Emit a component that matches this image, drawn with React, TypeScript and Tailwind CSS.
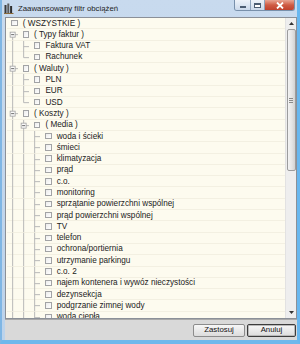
type Slot = "v" | "tee" | "end" | "exp" | "expDown";

type Row = { label: string; slots: Slot[] };

const rows: Row[] = [
  { label: "( WSZYSTKIE )", slots: [] },
  { label: "( Typy faktur )", slots: ["expDown"] },
  { label: "Faktura VAT", slots: ["v", "tee"] },
  { label: "Rachunek", slots: ["v", "end"] },
  { label: "( Waluty )", slots: ["exp"] },
  { label: "PLN", slots: ["v", "tee"] },
  { label: "EUR", slots: ["v", "tee"] },
  { label: "USD", slots: ["v", "end"] },
  { label: "( Koszty )", slots: ["exp"] },
  { label: "( Media )", slots: ["v", "exp"] },
  { label: "woda i ścieki", slots: ["v", "v", "tee"] },
  { label: "śmieci", slots: ["v", "v", "tee"] },
  { label: "klimatyzacja", slots: ["v", "v", "tee"] },
  { label: "prąd", slots: ["v", "v", "tee"] },
  { label: "c.o.", slots: ["v", "v", "tee"] },
  { label: "monitoring", slots: ["v", "v", "tee"] },
  { label: "sprzątanie powierzchni wspólnej", slots: ["v", "v", "tee"] },
  { label: "prąd powierzchni wspólnej", slots: ["v", "v", "tee"] },
  { label: "TV", slots: ["v", "v", "tee"] },
  { label: "telefon", slots: ["v", "v", "tee"] },
  { label: "ochrona/portiernia", slots: ["v", "v", "tee"] },
  { label: "utrzymanie parkingu", slots: ["v", "v", "tee"] },
  { label: "c.o. 2", slots: ["v", "v", "tee"] },
  { label: "najem kontenera i wywóz nieczystości", slots: ["v", "v", "tee"] },
  { label: "dezynsekcja", slots: ["v", "v", "tee"] },
  { label: "podgrzanie zimnej wody", slots: ["v", "v", "tee"] },
  { label: "woda ciepła", slots: ["v", "v", "tee"] },
];

const S = 11.3;
const C = S / 2;
const LINE = "#b8b8b8";

function Guide({ kind }: { kind: Slot }) {
  return (
    <div className="w-[11.3px] h-full shrink-0">
      <svg width={S} height={S} viewBox={`0 0 ${S} ${S}`} className="block">
        {(kind === "v" || kind === "tee" || kind === "exp") && (
          <line x1={C} y1={0} x2={C} y2={S} stroke={LINE} strokeWidth={1} />
        )}
        {kind === "end" && (
          <line x1={C} y1={0} x2={C} y2={C} stroke={LINE} strokeWidth={1} />
        )}
        {kind === "expDown" && (
          <line x1={C} y1={C} x2={C} y2={S} stroke={LINE} strokeWidth={1} />
        )}
        {kind !== "v" && (
          <line x1={C} y1={C} x2={S} y2={C} stroke={LINE} strokeWidth={1} />
        )}
        {(kind === "exp" || kind === "expDown") && (
          <>
            <rect
              x={C - 2.5}
              y={C - 2.5}
              width={5}
              height={5}
              fill="#fbfbfb"
              stroke="#a0a0a0"
              strokeWidth={0.8}
            />
            <line x1={C - 1.5} y1={C} x2={C + 1.5} y2={C} stroke="#444" strokeWidth={0.8} />
          </>
        )}
      </svg>
    </div>
  );
}

function TreeRow({ row }: { row: Row }) {
  return (
    <div className="flex items-center h-[11.3px] shrink-0 border-b border-[#f3f0e2]">
      {row.slots.map((s, i) => (
        <Guide key={i} kind={s} />
      ))}
      <div className="w-[11.3px] h-full shrink-0 flex items-center justify-end">
        <div className="w-[6.5px] h-[6.5px] border border-[#a2a3a5] bg-gradient-to-br from-[#ececec] to-white" />
      </div>
      <span className="ml-[5px] mt-[1px] whitespace-nowrap text-[8.2px] leading-none text-[#222]">
        {row.label}
      </span>
    </div>
  );
}

function CaptionButtons() {
  return (
    <div className="flex h-[11px] mr-[2px] rounded-b-[3px] overflow-hidden border border-t-0 border-[#7890ab]">
      <div className="w-[16px] flex items-center justify-center bg-gradient-to-b from-[#eef3f9] to-[#cbd9ea] border-r border-[#8ea3bc]">
        <div className="w-[6px] h-[2px] bg-white border border-[#4c5d72] mt-[3px]" />
      </div>
      <div className="w-[14px] flex items-center justify-center bg-gradient-to-b from-[#eef3f9] to-[#cbd9ea] border-r border-[#8ea3bc]">
        <div className="w-[7px] h-[5px] border border-[#4c5d72] border-t-2 bg-white" />
      </div>
      <div className="w-[29px] flex items-center justify-center bg-gradient-to-b from-[#e8a493] via-[#cf5b44] to-[#c0412d]">
        <svg width="8" height="7" viewBox="0 0 8 7">
          <path d="M1 0.5 L7 6.5 M7 0.5 L1 6.5" stroke="#fff" strokeWidth="1.8" />
        </svg>
      </div>
    </div>
  );
}

function Scrollbar() {
  return (
    <div className="w-[11px] h-full shrink-0 bg-[#eeeeee] border-l border-[#e2e2e2] flex flex-col items-center">
      <div className="h-[11px] flex items-center justify-center">
        <svg width="5" height="3" viewBox="0 0 5 3">
          <path d="M0 3 L2.5 0 L5 3 Z" fill="#333" />
        </svg>
      </div>
      <div className="w-[9px] h-[142px] rounded-[2px] border border-[#9c9c9c] bg-gradient-to-r from-[#f3f3f3] via-[#e6e6e6] to-[#d3d3d3] flex flex-col items-center justify-center gap-[1px]">
        <div className="w-[4px] h-px bg-[#8a8a8a]" />
        <div className="w-[4px] h-px bg-[#8a8a8a]" />
        <div className="w-[4px] h-px bg-[#8a8a8a]" />
      </div>
      <div className="flex-1" />
      <div className="h-[11px] flex items-center justify-center">
        <svg width="5" height="3" viewBox="0 0 5 3">
          <path d="M0 0 L2.5 3 L5 0 Z" fill="#333" />
        </svg>
      </div>
    </div>
  );
}

export default function App() {
  return (
    <div
      className="w-[300px] h-[344px] flex flex-col bg-gradient-to-b from-[#c8daee] to-[#bcd3eb] border-l-2 border-r-[3px] border-b-[4px] border-l-[#7fb6e4] border-r-[#68b7ef] border-b-[#6fb8ec] overflow-hidden"
      style={{ fontFamily: '"Liberation Sans", Arial, sans-serif' }}
    >
      <div className="h-[17px] flex items-start shrink-0">
        <div className="flex items-center h-[17px] pl-[2px] gap-[4px]">
          <svg width="10" height="11" viewBox="0 0 10 11">
            <rect x="0.5" y="2" width="2" height="8" fill="#3a3a3a" />
            <rect x="3.3" y="0.5" width="2" height="9.5" fill="#5a5a5a" />
            <rect x="6.1" y="3" width="2" height="7" fill="#2f2f2f" />
            <rect x="0" y="10" width="9.5" height="1" fill="#8a6a3a" />
          </svg>
          <span className="text-[7.8px] text-[#1e1e1e]">Zaawansowany filtr obciążeń</span>
        </div>
        <div className="flex-1" />
        <CaptionButtons />
      </div>
      <div className="flex-1 flex flex-col bg-[#f0f0f0] ml-[3px] min-h-0">
        <div className="h-[302px] flex border border-[#8b9098] bg-[#fdfbef] overflow-hidden shrink-0">
          <div className="flex-1 flex flex-col pl-[0.5px] overflow-hidden">
            {rows.map((r, i) => (
              <TreeRow key={i} row={r} />
            ))}
          </div>
          <Scrollbar />
        </div>
        <div className="flex-1 bg-[#d9d9d9] border-t border-[#a9a9a9] flex items-center justify-end gap-[2px] pr-[1px]">
          <button className="w-[52px] h-[13px] text-[7.8px] text-[#111] border border-[#8c8c8c] rounded-[2px] bg-gradient-to-b from-[#f7f7f7] to-[#dcdcdc] leading-none">
            Zastosuj
          </button>
          <button className="w-[49px] h-[13px] text-[7.8px] text-[#111] border border-[#3c3c3c] rounded-[2px] bg-gradient-to-b from-[#f7f7f7] to-[#dcdcdc] leading-none shadow-[inset_0_0_0_1px_#b9b9b9]">
            Anuluj
          </button>
        </div>
      </div>
    </div>
  );
}
